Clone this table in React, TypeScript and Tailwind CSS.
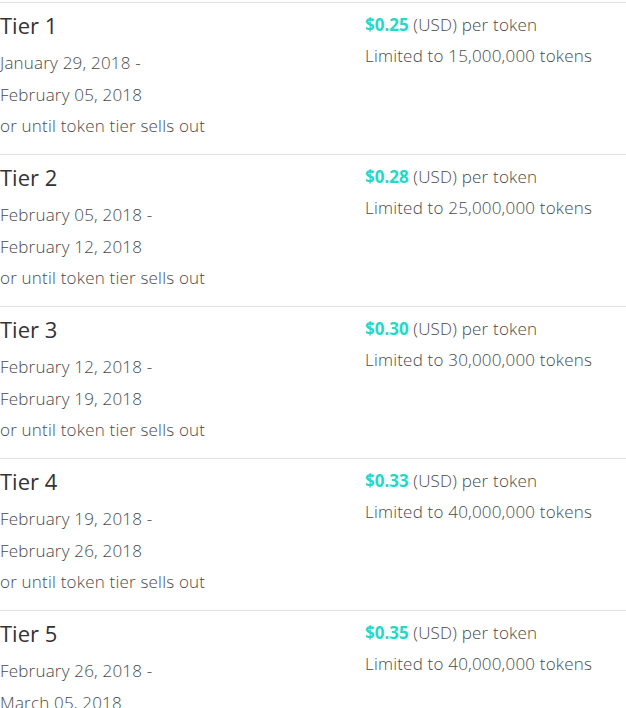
const tiers = [
  { name: 'Tier 1', from: 'January 29, 2018', to: 'February 05, 2018', price: '$0.25', limit: '15,000,000' },
  { name: 'Tier 2', from: 'February 05, 2018', to: 'February 12, 2018', price: '$0.28', limit: '25,000,000' },
  { name: 'Tier 3', from: 'February 12, 2018', to: 'February 19, 2018', price: '$0.30', limit: '30,000,000' },
  { name: 'Tier 4', from: 'February 19, 2018', to: 'February 26, 2018', price: '$0.33', limit: '40,000,000' },
  { name: 'Tier 5', from: 'February 26, 2018', to: 'March 05, 2018', price: '$0.35', limit: '40,000,000' },
]

export default function App() {
  return (
    <div className="w-[626px] h-[708px] overflow-hidden bg-white pt-[2px] font-['Open_Sans',sans-serif] text-[17px] font-light tracking-[0.2px] text-[#4a4a4a]">
      {tiers.map((t) => (
        <div key={t.name} className="flex border-t border-[#e0e0e0] pt-[7px] pb-[13px]">
          <div className="w-[365px] shrink-0">
            <h3 className="text-[22px] leading-[30px] font-normal tracking-normal text-[#333]">{t.name}</h3>
            <p className="mt-[7px] leading-[32px]">
              {t.from} -<br />
              {t.to}
            </p>
            <p className="leading-[30px]">or until token tier sells out</p>
          </div>
          <div>
            <p className="leading-[30px]">
              <span className="font-bold tracking-normal text-[#26d8c7]">{t.price}</span> (USD) per token
            </p>
            <p className="leading-[32px]">Limited to {t.limit} tokens</p>
          </div>
        </div>
      ))}
    </div>
  )
}
